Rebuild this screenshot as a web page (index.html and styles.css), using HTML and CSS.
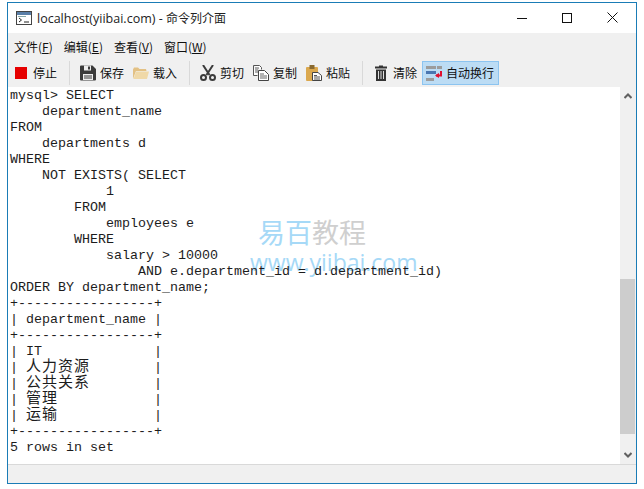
FILE: index.html
```html
<!DOCTYPE html>
<html lang="zh-CN">
<head>
<meta charset="utf-8">
<title>localhost(yiibai.com) - 命令列介面</title>
<link rel="stylesheet" href="styles.css">
</head>
<body>
<div class="window">
  <header class="titlebar">
    <svg class="app-icon" width="16" height="14" viewBox="0 0 16 14"><rect x=".5" y=".5" width="15" height="13" fill="#fff" stroke="#444"/><rect x="1" y="1" width="14" height="3" fill="#5a7fa8"/><rect x="2" y="5" width="8" height="1" fill="#8aa"/><path d="M3 7l2.500 2L3 11" fill="none" stroke="#222"/><path d="M8 11h5" stroke="#222"/></svg>
    <span class="title">localhost(yiibai.com) - <span class="title-cn">命令列介面</span></span>
    <div class="win-controls">
      <svg width="10" height="10" viewBox="0 0 10 10"><path d="M0 5.500h10" stroke="#111"/></svg>
      <svg width="10" height="10" viewBox="0 0 10 10"><rect x=".5" y=".5" width="9" height="9" fill="none" stroke="#111"/></svg>
      <svg width="11" height="11" viewBox="0 0 11 11"><path d="M.5.500l10 10M10.500.500l-10 10" stroke="#111" fill="none"/></svg>
    </div>
  </header>
  <nav class="menubar">
    <span class="menu">文件(<u>F</u>)</span>
    <span class="menu">编辑(<u>E</u>)</span>
    <span class="menu">查看(<u>V</u>)</span>
    <span class="menu">窗口(<u>W</u>)</span>
  </nav>
  <div class="toolbar">
    <div class="group">
      <div class="tool tool-stop"><svg width="12" height="12" viewBox="0 0 12 12"><rect width="12" height="12" fill="#e60000"/></svg><span>停止</span></div>
    </div>
    <i class="sep"></i>
    <div class="group">
      <div class="tool"><svg width="16" height="16" viewBox="0 0 16 16"><path d="M0 1.500a1 1 0 0 1 1-1h11.500L16 4v10.500a1 1 0 0 1-1 1H1a1 1 0 0 1-1-1z" fill="#3b3b3b"/><rect x="4" y=".5" width="7" height="5" fill="#eee"/><rect x="8" y="1.500" width="2" height="3" fill="#3b3b3b"/><rect x="3" y="9" width="10" height="6" fill="#eee"/><rect x="4" y="10.500" width="8" height="1" fill="#3b3b3b"/><rect x="4" y="12.500" width="8" height="1" fill="#3b3b3b"/></svg><span>保存</span></div>
      <div class="tool"><svg width="16" height="14" viewBox="0 0 16 14"><path d="M0 3.500 1 1.500h4l1.500 1.500H13l.5 2H3L0 13z" fill="#e3c184"/><path d="M3 5.500h13L14 13H.5z" fill="#f0d9a8"/></svg><span>载入</span></div>
    </div>
    <i class="sep"></i>
    <div class="group">
      <div class="tool"><svg width="16" height="16" viewBox="0 0 16 16"><path d="M3 0l6.500 10M13 0L6.500 10" stroke="#3b3b3b" stroke-width="2" fill="none"/><circle cx="3.500" cy="12.500" r="2.500" fill="none" stroke="#3b3b3b" stroke-width="2"/><circle cx="12.500" cy="12.500" r="2.500" fill="none" stroke="#3b3b3b" stroke-width="2"/></svg><span>剪切</span></div>
      <div class="tool"><svg width="16" height="16" viewBox="0 0 16 16"><path d="M.5.500h6l2 2v2M.5.500v10h4" fill="#fff" stroke="#555"/><path d="M5.500 5.500h6l4 4v6h-10z" fill="#fff" stroke="#444"/><path d="M7 9h4M7 11h7M7 13h7M2 3h4M2 5h3M2 7h3" stroke="#666"/></svg><span>复制</span></div>
      <div class="tool"><svg width="16" height="16" viewBox="0 0 16 16"><rect x="0" y="2" width="12" height="14" rx="1" fill="#dba84e"/><rect x="3.500" y="0" width="5" height="4" fill="#8a6a30"/><path d="M6.500 7.500h5.500l3.500 3v5h-9z" fill="#fff" stroke="#444"/><path d="M8 10.500h3M8 12h6M8 14h6" stroke="#555"/></svg><span>粘贴</span></div>
    </div>
    <i class="sep"></i>
    <div class="tool tool-clear"><svg width="12" height="16" viewBox="0 0 12 16"><path d="M4 1.500V.5h4v1h4v2H0v-2z" fill="#333"/><path d="M1 4.500h10V16H1z" fill="#333"/><path d="M3.500 6v8M6 6v8M8.500 6v8" stroke="#ddd"/></svg><span>清除</span></div>
    <div class="tool tool-wrap"><svg width="16" height="15" viewBox="0 0 16 15"><rect width="10" height="3" y="0" fill="#9c9c9c"/><rect x="11" width="5" height="3" fill="#9c9c9c"/><rect y="5" width="10" height="3" fill="#4a76b0"/><rect y="12" width="8" height="3" fill="#9c9c9c"/><path d="M15 5v4.500H10" fill="none" stroke="#e01030" stroke-width="2"/><path d="M13 7l-4 2.500 4 2.500z" fill="#e01030"/></svg><span>自动换行</span></div>
  </div>
  <div class="content">
    <div class="console">
      <div class="watermark"><div class="wm-cn"><span class="wm-blue">易百</span><span class="wm-grey">教程</span></div><div class="wm-url">www.yiibai.com</div></div>
      <div class="code">
        <div class="line">mysql&gt; SELECT</div>
        <div class="line">    department_name</div>
        <div class="line">FROM</div>
        <div class="line">    departments d</div>
        <div class="line">WHERE</div>
        <div class="line">    NOT EXISTS( SELECT</div>
        <div class="line">            1</div>
        <div class="line">        FROM</div>
        <div class="line">            employees e</div>
        <div class="line">        WHERE</div>
        <div class="line">            salary &gt; 10000</div>
        <div class="line">                AND e.department_id = d.department_id)</div>
        <div class="line">ORDER BY department_name;</div>
        <div class="line">+-----------------+</div>
        <div class="line">| department_name |</div>
        <div class="line">+-----------------+</div>
        <div class="line">| IT              |</div>
        <div class="line">| <span class="cjk">人力资源</span>        |</div>
        <div class="line">| <span class="cjk">公共关系</span>        |</div>
        <div class="line">| <span class="cjk">管理</span>            |</div>
        <div class="line">| <span class="cjk">运输</span>            |</div>
        <div class="line">+-----------------+</div>
        <div class="line">5 rows in set</div>
      </div>
    </div>
    <div class="scrollbar">
      <svg class="arrow" width="8" height="6" viewBox="0 0 8 6"><path d="M.5 5 4 1.500 7.500 5" fill="none" stroke="#606060" stroke-width="2"/></svg>
      <div class="track"><div class="thumb"></div></div>
      <svg class="arrow" width="8" height="6" viewBox="0 0 8 6"><path d="M.5 1 4 4.500 7.500 1" fill="none" stroke="#606060" stroke-width="2"/></svg>
    </div>
  </div>
  <footer class="statusbar"></footer>
</div>
</body>
</html>
```
FILE: styles.css
```css
* { box-sizing: border-box; }
html, body { margin: 0; height: 100%; background: #fff; }
body { padding: 2px 7px 5px 7px; overflow: hidden; }
.window {
  width: 630px;
  height: 482px;
  border: 1px solid #1a7cb6;
  display: flex;
  flex-direction: column;
  background: #f0f0f0;
  font-family: "Noto Sans CJK SC", "Noto Sans", sans-serif;
  color: #111;
}
.titlebar {
  height: 30px;
  flex: none;
  background: #fff;
  display: flex;
  align-items: center;
  padding: 0 0 1px 8px;
}
.app-icon { flex: none; }
.title {
  margin-left: 5px;
  font-family: "Open Sans", "Noto Sans CJK SC", sans-serif;
  font-size: 12.5px;
  color: #222;
}
.title-cn { font-size: 12px; }
.win-controls {
  margin-left: auto;
  margin-right: 18px;
  display: flex;
  align-items: center;
  gap: 35px;
}
.menubar {
  height: 28px;
  flex: none;
  display: flex;
  align-items: center;
  gap: 11px;
  padding: 0 0 1px 6px;
  font-size: 12px;
}
.menu { line-height: 16px; }
.toolbar {
  height: 26px;
  flex: none;
  display: flex;
  align-items: flex-start;
  padding-left: 7px;
  font-size: 12px;
}
.group { display: flex; gap: 9px; }
.tool {
  display: flex;
  align-items: center;
  height: 24px;
  gap: 4px;
}
.tool span { line-height: 16px; }
.tool-stop { gap: 6px; }
.tool-clear { gap: 6px; margin: 0 5px 0 2px; }
.tool-wrap {
  width: 77px;
  padding-left: 3px;
  background: #bcdcf4;
  border: 1px solid #8cc4f0;
}
.sep {
  width: 1px;
  height: 24px;
  background: #d9d9d9;
  margin: 0 10px 0 12px;
  flex: none;
}
.content {
  flex: 1;
  min-height: 0;
  display: flex;
}
.console {
  flex: 1;
  position: relative;
  background: #fff;
  padding: 1px 0 0 2px;
  overflow: hidden;
}
.code {
  position: relative;
  font-family: "Liberation Mono", "Noto Sans CJK SC", monospace;
  font-size: 13.33px;
  line-height: 16px;
  color: #1c1c1c;
}
.line { height: 16px; white-space: pre; }
.cjk {
  font-family: "Noto Sans CJK SC", sans-serif;
  font-size: 15px;
  letter-spacing: 1px;
  line-height: 0;
  vertical-align: 0;
}
.watermark {
  position: absolute;
  left: 242px;
  top: 127px;
  width: 142px;
}
.wm-cn { font-size: 27px; line-height: 36px; padding-left: 8px; }
.wm-blue { color: #a6d9f7; }
.wm-grey { color: #cfcfcf; }
.wm-url {
  font-family: "Open Sans", sans-serif;
  font-size: 23px;
  line-height: 24px;
  color: #a6d9f7;
  white-space: nowrap;
}
.scrollbar {
  width: 16px;
  flex: none;
  display: flex;
  flex-direction: column;
  align-items: center;
  background: #f0f0f0;
}
.arrow { flex: none; margin: 6px 0; }
.track { flex: 1; width: 100%; padding-top: 174px; }
.thumb { width: 15px; height: 155px; background: #cdcdcd; }
.statusbar {
  height: 19px;
  flex: none;
  background: #f0f0f0;
  border-top: 1px solid #d9d9d9;
}
```
